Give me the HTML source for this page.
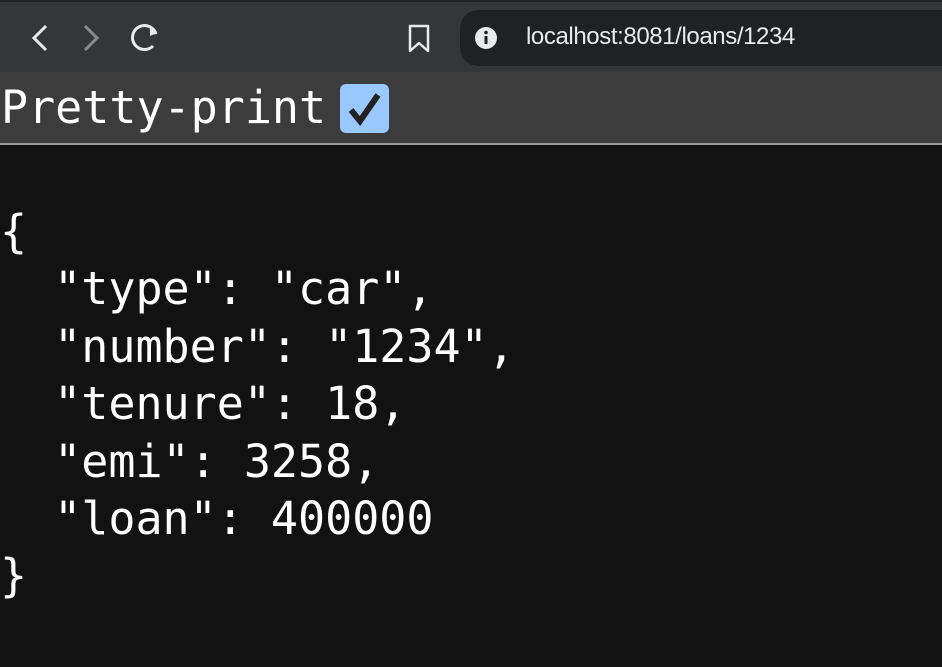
<!DOCTYPE html>
<html><head><style>
*{margin:0;padding:0;box-sizing:border-box}
body{width:942px;height:667px;background:#121212;overflow:hidden;font-family:"DejaVu Sans Mono","Liberation Mono",monospace;color:#fff}
.tb{position:absolute;left:0;top:0;width:942px;height:72px;background:#35363a;border-top:2px solid #202124}
.addr{position:absolute;left:460px;top:8px;width:500px;height:56px;background:#202124;border-radius:18px}
.url{position:absolute;left:526px;top:21px;font-family:"Liberation Sans",sans-serif;font-size:24px;color:#e8eaed;letter-spacing:-0.4px}
.pp{position:absolute;left:0;top:72px;width:942px;height:73px;background:#3c3c3c;border-bottom:2px solid #9a9a9a}
.pp span{position:absolute;left:1px;top:10px;font-size:45px;line-height:52px;color:#fff}
.cb{position:absolute;left:340px;top:84px;width:49px;height:49px;background:#99c8ff;border-radius:6px}
pre{position:absolute;left:0;top:203px;font-size:45px;line-height:57.4px;font-family:"DejaVu Sans Mono","Liberation Mono",monospace;color:#fff}
</style></head><body>
<div class="tb">
<svg style="position:absolute;left:0;top:0" width="460" height="72">
<path d="M46 24 L34 36 L46 48" stroke="#e8eaed" stroke-width="3" fill="none"/>
<path d="M85 24 L97 36 L85 48" stroke="#8a8b8e" stroke-width="3" fill="none"/>
<path d="M156 32 A12 12 0 1 0 153 44" stroke="#e8eaed" stroke-width="3" fill="none"/>
<path d="M150 26 L157 31 L150 34 Z" fill="#e8eaed"/>
<path d="M410 24 H428 V49 L419 41 L410 49 Z" stroke="#e8eaed" stroke-width="2.5" fill="none" stroke-linejoin="round"/>
</svg>
<div class="addr"></div>
<svg style="position:absolute;left:474px;top:24px" width="24" height="24"><circle cx="12" cy="12" r="11" fill="#e8eaed"/><rect x="10.5" y="10" width="3" height="8" fill="#202124"/><circle cx="12" cy="6.5" r="1.8" fill="#202124"/></svg>
<div class="url">localhost:8081/loans/1234</div>
</div>
<div class="pp"><span>Pretty-print</span></div>
<div class="cb"><svg width="49" height="49"><path d="M11 26 L20 37 L38 11" stroke="#222" stroke-width="6" fill="none"/></svg></div>
<pre>{
  "type": "car",
  "number": "1234",
  "tenure": 18,
  "emi": 3258,
  "loan": 400000
}</pre>
</body></html>
